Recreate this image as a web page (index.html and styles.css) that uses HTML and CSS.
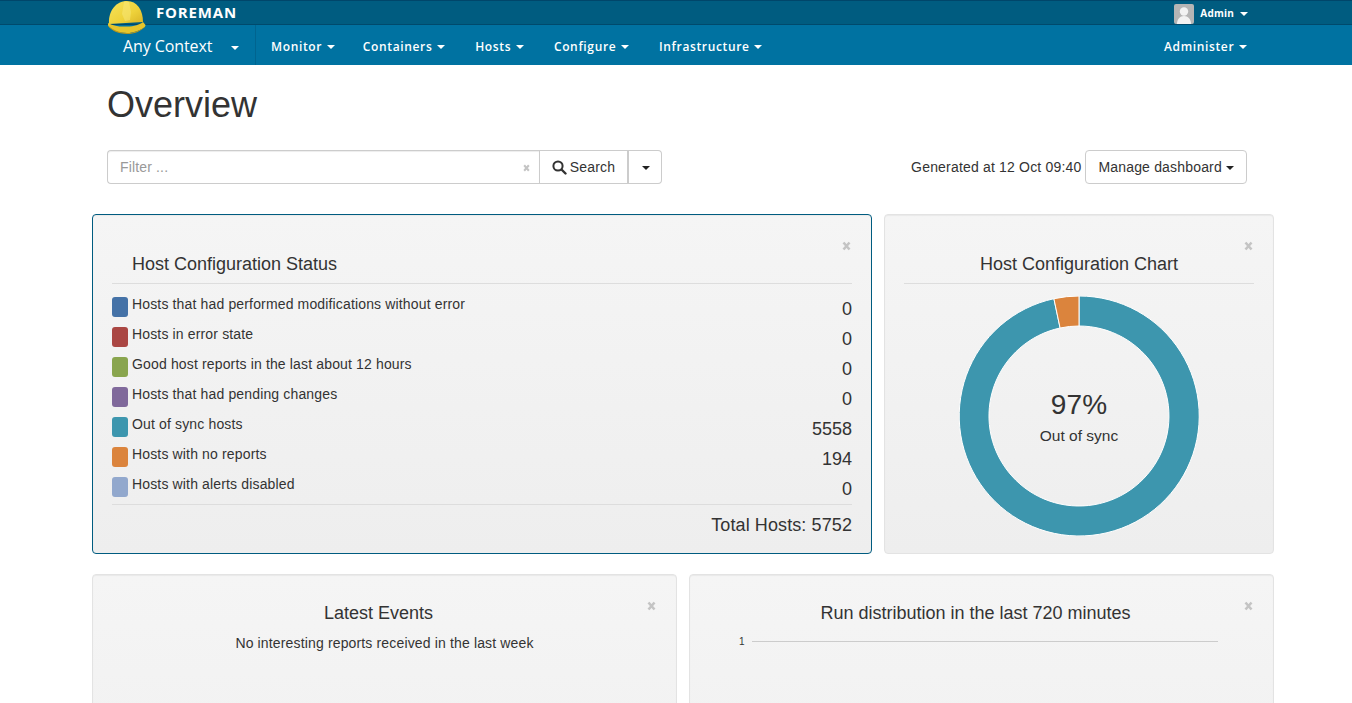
FILE: index.html
```html
<!DOCTYPE html>
<html lang="en">

<head>
    <meta charset="UTF-8">
    <title>Overview</title>
    <link rel="stylesheet" href="styles.css">
</head>

<body>
    <header>
        <div class="topbar">
            <div class="brand">
                <svg class="hat" width="40" height="35" viewBox="0 0 40 35">
                    <defs>
                        <linearGradient id="hatFill" x1="0" y1="0" x2="1" y2="1">
                            <stop offset="0" stop-color="#f6e45c" />
                            <stop offset="0.6" stop-color="#eed23a" />
                            <stop offset="1" stop-color="#d8b326" />
                        </linearGradient>
                    </defs>
                    <path d="M2 24C1 11 9 1 20 1c10 0 16 9 16 21z" fill="url(#hatFill)" />
                    <path d="M1 23c6 3 12 4 19 3.500 7 0 13-2 16-4.500l2.500 3c0 1.500-1 2.500-3 3.500-3 2-9 4.500-15.500 4.500-9 0-17-3.500-19-7.500z" fill="#e5c52c" />
                    <path d="M1 25c3 4 11 8 19 8 7 0 13-2.500 18-6.500-4 5-11 7.500-18 7.500-9 0-17-4-19-9z" fill="#b8971a" />
                    <path d="M17 2l-2 12 3 7 5-1 1-8-2-10z" fill="#f9ec85" opacity="0.45" />
                </svg>
                <span class="brand-name">FOREMAN</span>
            </div>
            <div class="user">
                <svg class="avatar" width="20" height="20" viewBox="0 0 20 20">
                    <rect width="20" height="20" rx="2" fill="#b5b5b5" />
                    <circle cx="10" cy="7.500" r="4.200" fill="#f2f2f2" />
                    <path d="M3 20c0-5 3-8 7-8s7 3 7 8z" fill="#f2f2f2" />
                </svg>
                <span class="user-name">Admin</span>
                <span class="caret"></span>
            </div>
        </div>
        <nav class="navbar">
            <div class="context">Any Context <span class="caret"></span></div>
            <ul class="menu">
                <li>Monitor <span class="caret"></span></li>
                <li>Containers <span class="caret"></span></li>
                <li>Hosts <span class="caret"></span></li>
                <li>Configure <span class="caret"></span></li>
                <li>Infrastructure <span class="caret"></span></li>
            </ul>
            <div class="administer">Administer <span class="caret"></span></div>
        </nav>
    </header>

    <div class="page-head">
        <h1>Overview</h1>
        <div class="toolbar">
            <div class="search">
                <div class="search-input">
                    <span class="placeholder">Filter ...</span>
                    <svg class="clear" width="7" height="8" viewBox="0 0 9 10">
                        <path d="M1.500 1.500l6 7M7.500 1.500l-6 7" stroke="#c4c4c4" stroke-width="2.600" />
                    </svg>
                </div>
                <button class="search-btn">
                    <svg width="15" height="15" viewBox="0 0 15 15">
                        <circle cx="6" cy="6" r="4.600" fill="none" stroke="#333" stroke-width="2" />
                        <path d="M9.500 9.500l4 4" stroke="#333" stroke-width="2.400" stroke-linecap="round" />
                    </svg>
                    Search
                </button>
                <button class="search-drop"><span class="caret dark"></span></button>
            </div>
            <div class="generated">
                <span>Generated at 12 Oct 09:40</span>
                <button class="manage">Manage dashboard <span class="caret dark small"></span></button>
            </div>
        </div>
    </div>

    <main class="dashboard">
        <div class="row row-top">
            <section class="widget status">
                <svg class="close" width="9" height="10" viewBox="0 0 9 10">
                    <path d="M1.500 1.500l6 7M7.500 1.500l-6 7" stroke="#c4c4c4" stroke-width="2.600" />
                </svg>
                <h3 class="status-title">Host Configuration Status</h3>
                <ul class="legend">
                    <li><i class="swatch c-blue"></i><span>Hosts that had performed modifications without error</span><b>0</b></li>
                    <li><i class="swatch c-red"></i><span>Hosts in error state</span><b>0</b></li>
                    <li><i class="swatch c-green"></i><span>Good host reports in the last about 12 hours</span><b>0</b></li>
                    <li><i class="swatch c-purple"></i><span>Hosts that had pending changes</span><b>0</b></li>
                    <li><i class="swatch c-teal"></i><span>Out of sync hosts</span><b>5558</b></li>
                    <li><i class="swatch c-orange"></i><span>Hosts with no reports</span><b>194</b></li>
                    <li><i class="swatch c-lilac"></i><span>Hosts with alerts disabled</span><b>0</b></li>
                </ul>
                <div class="total">Total Hosts: 5752</div>
            </section>
            <section class="widget chart">
                <svg class="close" width="9" height="10" viewBox="0 0 9 10">
                    <path d="M1.500 1.500l6 7M7.500 1.500l-6 7" stroke="#c4c4c4" stroke-width="2.600" />
                </svg>
                <h3 class="chart-title">Host Configuration Chart</h3>
                <div class="donut">
                    <svg width="240" height="240" viewBox="0 0 240 240">
                        <path d="M120 0A120 120 0 1 1 94.900 2.700L101.100 32A90 90 0 1 0 120 30z" fill="#3d96ae" stroke="#fff" stroke-width="1" />
                        <path d="M94.900 2.700A120 120 0 0 1 120 0V30A90 90 0 0 0 101.100 32z" fill="#db843d" stroke="#fff" stroke-width="1" />
                    </svg>
                    <div class="donut-label">
                        <div class="pct">97%</div>
                        <div class="pct-name">Out of sync</div>
                    </div>
                </div>
            </section>
        </div>
        <div class="row">
            <section class="widget half">
                <svg class="close" width="9" height="10" viewBox="0 0 9 10">
                    <path d="M1.500 1.500l6 7M7.500 1.500l-6 7" stroke="#c4c4c4" stroke-width="2.600" />
                </svg>
                <h3 class="half-title">Latest Events</h3>
                <p class="empty">No interesting reports received in the last week</p>
            </section>
            <section class="widget half">
                <svg class="close" width="9" height="10" viewBox="0 0 9 10">
                    <path d="M1.500 1.500l6 7M7.500 1.500l-6 7" stroke="#c4c4c4" stroke-width="2.600" />
                </svg>
                <h3 class="half-title">Run distribution in the last 720 minutes</h3>
                <div class="axis">
                    <span>1</span>
                    <div class="axis-line"></div>
                </div>
            </section>
        </div>
    </main>
</body>

</html>
```

FILE: styles.css
```css
html,
body {
    height: 703px;
    overflow: hidden;
}

body {
    margin: 0;
    font-family: "Liberation Sans", Arial, sans-serif;
    font-size: 14px;
    letter-spacing: 0.15px;
    color: #333;
    background: #fff;
}

ul {
    list-style: none;
    margin: 0;
    padding: 0;
}

.caret {
    display: inline-block;
    width: 0;
    height: 0;
    margin-left: 1px;
    vertical-align: middle;
    border-top: 4px solid #fff;
    border-left: 4px solid transparent;
    border-right: 4px solid transparent;
}

.caret.dark {
    border-top-color: #222;
}

.caret.small {
    margin-left: 0;
}

/* header */
.topbar {
    height: 23px;
    display: flex;
    justify-content: space-between;
    align-items: center;
    padding: 0 104px 0 107px;
    background: #005c80;
    border-top: 1px solid #00466a;
    border-bottom: 1px solid #004a6c;
}

.brand {
    display: flex;
    align-items: center;
}

.hat {
    position: absolute;
    top: 0;
    left: 107px;
}

.brand-name {
    margin: 0 0 2px 49px;
    font-family: "Open Sans", sans-serif;
    font-size: 15px;
    font-weight: 700;
    letter-spacing: 0.85px;
    color: #fff;
}

.user {
    display: flex;
    align-items: center;
    color: #fff;
    font-family: "Open Sans", sans-serif;
    font-size: 10px;
    font-weight: 700;
    letter-spacing: 0.2px;
}

.avatar {
    margin: 3px 6px 0 0;
}

.user-name {
    margin-top: 1px;
}

.user .caret {
    margin: 2px 0 0 6px;
}

.navbar {
    height: 40px;
    display: flex;
    align-items: center;
    padding: 0 105px 0 107px;
    background: #0072a1;
    color: #fff;
    font-family: "Open Sans", sans-serif;
    font-size: 12px;
    font-weight: 600;
    letter-spacing: 0.64px;
}

.navbar .caret {
    border-left-width: 4.500px;
    border-right-width: 4.500px;
}

.context {
    width: 149px;
    height: 40px;
    line-height: 42px;
    padding-left: 16px;
    box-sizing: border-box;
    font-size: 16px;
    font-weight: 400;
    letter-spacing: -0.1px;
    border-right: 1px solid #00648f;
    white-space: nowrap;
}

.context .caret {
    margin-left: 15px;
}

.menu {
    display: flex;
    flex: 1;
    gap: 30px;
    padding-left: 15px;
    margin-top: 2px;
}

.menu li:first-child {
    margin-right: -2px;
}

.administer {
    margin-top: 2px;
}

/* page head */
.page-head {
    padding: 0 105px 0 107px;
}

h1 {
    margin: 0;
    padding-top: 18px;
    height: 48px;
    font-size: 36px;
    font-weight: 400;
    line-height: 43px;
    letter-spacing: 0;
}

.toolbar {
    margin-top: 19px;
    display: flex;
    justify-content: space-between;
    align-items: center;
}

.search {
    display: flex;
    height: 34px;
    width: 555px;
}

.search-input {
    flex: 1;
    display: flex;
    justify-content: space-between;
    align-items: center;
    padding: 0 9px 0 12px;
    border: 1px solid #ccc;
    border-right: 0;
    border-radius: 4px 0 0 4px;
    box-shadow: inset 0 1px 1px rgba(0, 0, 0, 0.075);
}

.placeholder {
    color: #999;
}

.clear {
    margin-top: 2px;
}

button {
    font-family: inherit;
    font-size: 14px;
    letter-spacing: inherit;
    color: #333;
    background: #fff;
    border: 1px solid #ccc;
}

.search-btn {
    width: 89px;
    padding: 0;
    display: flex;
    align-items: center;
    justify-content: center;
    gap: 3px;
}

.search-drop {
    width: 35px;
    margin-left: -1px;
    padding: 0;
    border-left-width: 2px;
    border-radius: 0 4px 4px 0;
}

.generated {
    display: flex;
    align-items: center;
    gap: 4px;
    letter-spacing: 0.18px;
}

.manage {
    height: 34px;
    padding: 0 12px;
    border-radius: 4px;
}

/* widgets */
.dashboard {
    margin: 30px 78px 0 92px;
}

.row {
    display: flex;
    gap: 12px;
    margin-bottom: 20px;
}

.widget {
    position: relative;
    box-sizing: border-box;
    flex: 1;
    height: 340px;
    padding: 0 19px;
    border: 1px solid #e3e3e3;
    border-radius: 4px;
    background: linear-gradient(#f5f5f5, #eee);
    box-shadow: inset 0 1px 1px rgba(0, 0, 0, 0.05);
}

.status {
    flex: 0 0 780px;
    border-color: #005c80;
}

.close {
    position: absolute;
    top: 26px;
    right: 20px;
}

h3 {
    margin: 0;
    font-size: 18px;
    font-weight: 400;
    line-height: 20px;
    letter-spacing: 0;
}

.status-title {
    padding: 39px 0 9px 20px;
    border-bottom: 1px solid #ddd;
}

.legend {
    padding-top: 10px;
}

.legend li {
    display: flex;
    height: 30px;
    align-items: flex-start;
}

.legend li span {
    flex: 1;
    margin-left: 4px;
    line-height: 20px;
}

.legend li b {
    font-size: 18px;
    font-weight: 400;
    line-height: 20px;
    letter-spacing: 0;
    margin-top: 5px;
}

.swatch {
    flex: none;
    width: 16px;
    height: 20px;
    margin-top: 3px;
    border-radius: 3px;
}

.c-blue { background: #4572a7; }
.c-red { background: #aa4643; }
.c-green { background: #89a54e; }
.c-purple { background: #80699b; }
.c-teal { background: #3d96ae; }
.c-orange { background: #db843d; }
.c-lilac { background: #92a8cd; }

.total {
    border-top: 1px solid #ddd;
    padding-top: 10px;
    text-align: right;
    font-size: 18px;
    line-height: 20px;
    letter-spacing: 0.1px;
}

.chart-title {
    padding: 39px 0 9px;
    text-align: center;
    border-bottom: 1px solid #ddd;
}

.donut {
    position: relative;
    width: 240px;
    height: 240px;
    margin: 12px auto 0;
}

.donut-label {
    position: absolute;
    top: 91px;
    left: 0;
    right: 0;
    text-align: center;
}

.pct {
    font-size: 28px;
    line-height: 36px;
}

.pct-name {
    font-size: 15.500px;
    line-height: 22px;
    letter-spacing: 0;
    margin-top: 2px;
}

.half-title {
    padding: 28px 12px 0 0;
    text-align: center;
}

.empty {
    margin: 10px 0 0;
    text-align: center;
    line-height: 20px;
}

.axis {
    display: flex;
    align-items: center;
    margin: 13px 36px 0 30px;
    font-size: 10px;
    gap: 7px;
}

.axis-line {
    flex: 1;
    height: 1px;
    background: #ccc;
}
```
